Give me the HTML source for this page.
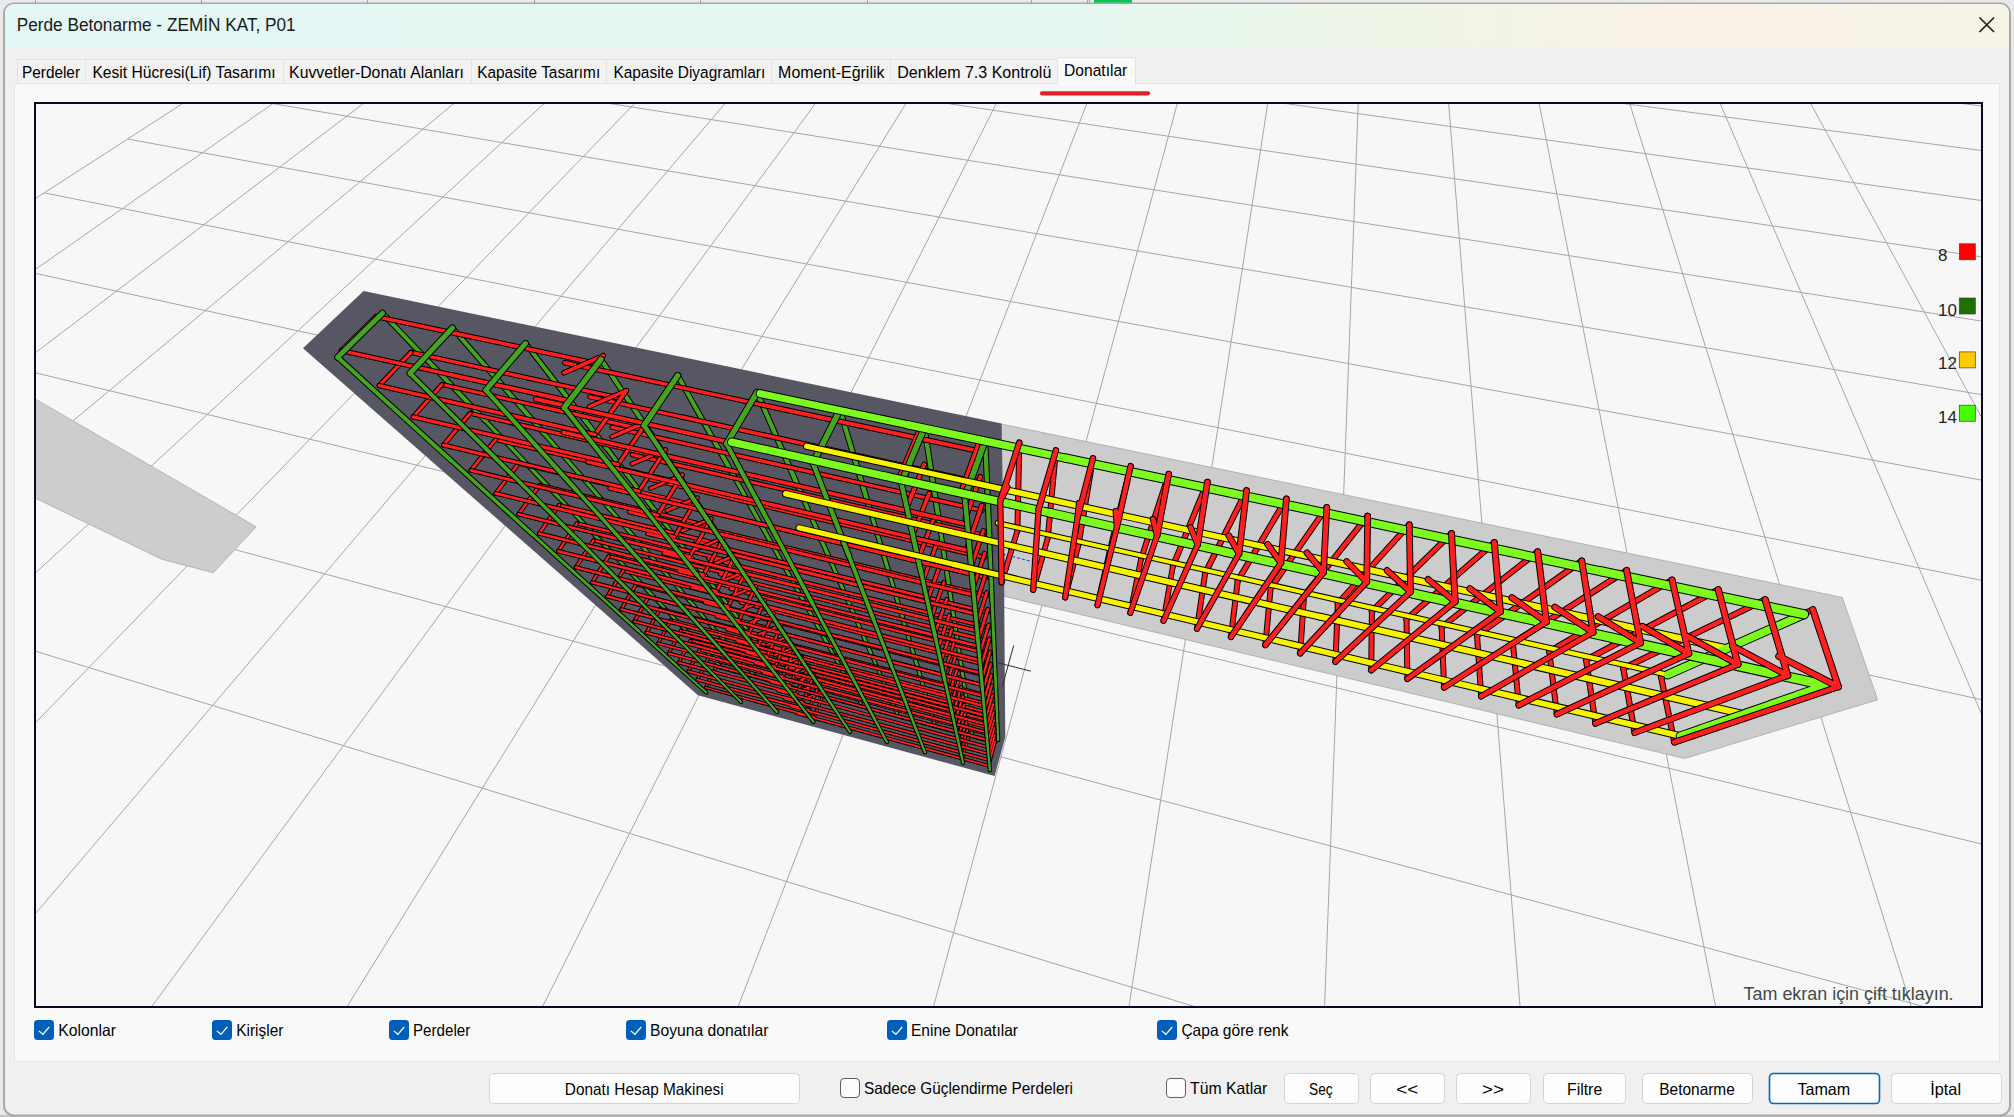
<!DOCTYPE html>
<html><head><meta charset="utf-8"><style>
html,body{margin:0;padding:0;width:2014px;height:1117px;overflow:hidden;background:#e9e9e9}
svg{display:block}
text{font-family:"Liberation Sans",sans-serif}
</style></head><body>
<svg width="2014" height="1117" viewBox="0 0 2014 1117">
<rect x="0" y="0" width="2014" height="1117" fill="#e9e9e9"/>
<line x1="35.5" y1="0" x2="35.5" y2="3" stroke="#9a9ab8" stroke-width="1"/>
<line x1="201.5" y1="0" x2="201.5" y2="3" stroke="#9a9ab8" stroke-width="1"/>
<line x1="367.5" y1="0" x2="367.5" y2="3" stroke="#9a9ab8" stroke-width="1"/>
<line x1="534.5" y1="0" x2="534.5" y2="3" stroke="#9a9ab8" stroke-width="1"/>
<line x1="700.5" y1="0" x2="700.5" y2="3" stroke="#9a9ab8" stroke-width="1"/>
<line x1="867.5" y1="0" x2="867.5" y2="3" stroke="#9a9ab8" stroke-width="1"/>
<line x1="1031.5" y1="0" x2="1031.5" y2="3" stroke="#9a9ab8" stroke-width="1"/>
<line x1="1087.5" y1="0" x2="1087.5" y2="3" stroke="#9a9ab8" stroke-width="1"/>
<line x1="1089.5" y1="0" x2="1089.5" y2="3" stroke="#9a9ab8" stroke-width="1"/>
<rect x="1094" y="0" width="38" height="3" fill="#00c853"/>
<defs><linearGradient id="tg" x1="0" y1="0" x2="1" y2="0"><stop offset="0" stop-color="#e3f7f6"/><stop offset="0.52" stop-color="#e4f7f0"/><stop offset="0.7" stop-color="#eef5e6"/><stop offset="0.83" stop-color="#faf1e8"/><stop offset="1" stop-color="#f6f3e7"/></linearGradient><clipPath id="wclip"><rect x="5" y="4" width="2004" height="1110.5" rx="9"/></clipPath><clipPath id="vclip"><rect x="36" y="104" width="1945" height="902"/></clipPath></defs>
<rect x="0" y="1115" width="2014" height="2" fill="#c4c4c4"/>
<rect x="3" y="2.5" width="2008" height="1114" rx="11" fill="#a9a9a9"/>
<g clip-path="url(#wclip)">
<rect x="5" y="4" width="2004" height="1111" fill="#f0f0f0"/>
<rect x="5" y="4" width="2004" height="43" fill="url(#tg)"/>
</g>
<text x="16.7" y="31.3" font-size="18.7" fill="#1a1a1a" textLength="279" lengthAdjust="spacingAndGlyphs" >Perde Betonarme - ZEMİN KAT, P01</text>
<path d="M1979.5 17.5 L1994 32 M1994 17.5 L1979.5 32" stroke="#1a1a1a" stroke-width="1.6" fill="none"/>
<rect x="17.5" y="59.5" width="68" height="24" fill="#f2f2f2" stroke="#e3e3e3" stroke-width="1"/>
<text x="22.0" y="78" font-size="17.4" fill="#000" textLength="58.0" lengthAdjust="spacingAndGlyphs" >Perdeler</text>
<rect x="85.5" y="59.5" width="198" height="24" fill="#f2f2f2" stroke="#e3e3e3" stroke-width="1"/>
<text x="92.4" y="78" font-size="17.4" fill="#000" textLength="183.2" lengthAdjust="spacingAndGlyphs" >Kesit Hücresi(Lif) Tasarımı</text>
<rect x="283.5" y="59.5" width="188" height="24" fill="#f2f2f2" stroke="#e3e3e3" stroke-width="1"/>
<text x="289.1" y="78" font-size="17.4" fill="#000" textLength="174.7" lengthAdjust="spacingAndGlyphs" >Kuvvetler-Donatı Alanları</text>
<rect x="471.5" y="59.5" width="135" height="24" fill="#f2f2f2" stroke="#e3e3e3" stroke-width="1"/>
<text x="477.2" y="78" font-size="17.4" fill="#000" textLength="123.0" lengthAdjust="spacingAndGlyphs" >Kapasite Tasarımı</text>
<rect x="606.5" y="59.5" width="165" height="24" fill="#f2f2f2" stroke="#e3e3e3" stroke-width="1"/>
<text x="613.4" y="78" font-size="17.4" fill="#000" textLength="151.9" lengthAdjust="spacingAndGlyphs" >Kapasite Diyagramları</text>
<rect x="771.5" y="59.5" width="119" height="24" fill="#f2f2f2" stroke="#e3e3e3" stroke-width="1"/>
<text x="778.1" y="78" font-size="17.4" fill="#000" textLength="106.4" lengthAdjust="spacingAndGlyphs" >Moment-Eğrilik</text>
<rect x="890.5" y="59.5" width="167" height="24" fill="#f2f2f2" stroke="#e3e3e3" stroke-width="1"/>
<text x="897.3" y="78" font-size="17.4" fill="#000" textLength="154.0" lengthAdjust="spacingAndGlyphs" >Denklem 7.3 Kontrolü</text>
<rect x="14.5" y="83.5" width="1985" height="978" fill="#f9f9f9" stroke="#e4e4e4" stroke-width="1"/>
<rect x="1057.5" y="57.5" width="78" height="27" fill="#f9f9f9" stroke="#e3e3e3" stroke-width="1"/>
<rect x="1058" y="82" width="77" height="4" fill="#f9f9f9"/>
<text x="1064.1" y="76.3" font-size="17.4" fill="#000" textLength="63.2" lengthAdjust="spacingAndGlyphs" >Donatılar</text>
<line x1="1042" y1="93.3" x2="1148" y2="93.3" stroke="#e0202a" stroke-width="4.2" stroke-linecap="round"/>
<rect x="35" y="103" width="1947" height="904" fill="#f7f7f7" stroke="#0a0a1e" stroke-width="2"/>
<g clip-path="url(#vclip)">
<path d="M690.4 -224.4L-2589.9 1894.0M736.7 -220.3L-2495.8 2036.7M783.9 -216.0L-2390.7 2196.2M832.0 -211.7L-2272.5 2375.7M881.0 -207.3L-2138.4 2579.0M930.9 -202.8L-1985.2 2811.5M981.8 -198.2L-1808.4 3079.8M1033.7 -193.5L-1602.1 3392.9M1086.7 -188.7L-1358.2 3762.9M1140.7 -183.9L-1065.5 4207.1M1195.9 -178.9L-707.6 4750.1M1252.1 -173.8L-260.1 5429.1M1309.5 -168.7L315.5 6302.6M1368.2 -163.4L1083.5 7467.8M1428.0 -158.0L2159.6 9100.6M1489.2 -152.5L3775.6 11552.7M1551.7 -146.8L6474.3 15647.5M1615.5 -141.1L11891.3 23867.1M1680.8 -135.2L28301.9 48767.7M1747.5 -129.2L-2217100.8 -3358305.4M1815.7 -123.1L-35932.1 -48698.0M1885.5 -116.8L-20220.6 -24858.1M1956.9 -110.3L-14933.0 -16835.0M2030.0 -103.7L-12279.7 -12808.9M2104.8 -97.0L-10684.6 -10388.6M2181.4 -90.1L-9620.0 -8773.1M2259.9 -83.0L-8858.8 -7618.2M2340.3 -75.8L-8287.7 -6751.6M2422.7 -68.4L-7843.2 -6077.2M690.4 -224.4L3485.9 27.4M665.6 -208.4L3605.0 67.2M639.0 -191.2L3738.4 111.8M610.3 -172.7L3888.9 162.2M579.3 -152.7L4059.9 219.4M545.8 -131.1L4256.1 285.0M509.4 -107.5L4483.3 360.9M469.7 -81.9L4749.6 450.0M426.2 -53.8L5066.1 555.8M378.4 -22.9L5448.3 683.7M325.5 11.2L5919.1 841.1M266.9 49.1L6513.4 1039.9M201.3 91.4L7287.1 1298.6M127.7 139.0L8335.9 1649.4M44.3 192.9L9838.3 2151.8M-51.0 254.4L12169.4 2931.4M-160.8 325.3L16276.4 4304.8M-288.8 407.9L25437.2 7368.4M-439.8 505.5L63897.7 20230.6M-620.7 622.3L-102936.8 -35562.9M-841.4 764.8L-27047.4 -10183.7M-1116.6 942.6L-15073.4 -6179.3M-1469.3 1170.4L-10195.7 -4548.1M-1937.7 1472.9L-7548.0 -3662.6" stroke="#a6a6a6" stroke-width="1" fill="none"/>
<polygon points="35,398.8 256.2,526.8 213.3,572.7 161.7,559.2 35,498" fill="#cdcdcd" stroke="#a9a9a9" stroke-width="0.8"/>
<polygon points="1001,424 1842.3,597.4 1877.7,699.8 1684.7,758.5 1004.5,596.4" fill="#cccccc" stroke="#a8a8a8" stroke-width="0.8"/>
<polygon points="363.6,291 1001.6,423.4 1004.2,596 1005.3,737 994.6,776 698,695.2 303,348.3" fill="#575763"/>
<path d="M691.2 636.0L719.7 665.7M728.8 645.8L754.0 674.9M767.4 656.0L789.3 684.3M806.6 666.3L825.1 693.9M845.9 676.6L860.8 703.5" stroke="#000" stroke-width="4.00" stroke-linecap="round" fill="none"/>
<path d="M656.5 599.7L691.2 636.0M697.9 610.4L728.8 645.8M740.6 621.3L767.4 656.0M783.9 632.5L806.6 666.3M827.5 643.7L845.9 676.6M871.8 655.1L885.7 687.1M885.7 687.1L897.1 713.2M926.8 697.9L934.4 723.2M968.0 708.8L971.8 733.2M997.1 716.4L998.2 740.2" stroke="#000" stroke-width="4.25" stroke-linecap="round" fill="none"/>
<path d="M613.3 554.5L656.5 599.7M659.4 566.1L697.9 610.4M707.0 578.0L740.6 621.3M755.6 590.2L783.9 632.5M917.5 666.9L926.8 697.9M963.3 678.7L968.0 708.8M995.9 687.1L997.1 716.4" stroke="#000" stroke-width="4.50" stroke-linecap="round" fill="none"/>
<path d="M557.9 496.6L613.3 554.5M804.4 602.4L827.5 643.7M854.2 614.9L871.8 655.1M905.6 627.8L917.5 666.9M957.4 640.8L963.3 678.7M994.2 650.0L995.9 687.1" stroke="#000" stroke-width="4.75" stroke-linecap="round" fill="none"/>
<path d="M610.0 509.2L659.4 566.1M663.9 522.2L707.0 578.0M719.0 535.5L755.6 590.2M774.6 549.0L804.4 602.4M831.4 562.7L854.2 614.9M890.3 576.9L905.6 627.8M949.8 591.3L957.4 640.8M992.1 601.5L994.2 650.0" stroke="#000" stroke-width="5.00" stroke-linecap="round" fill="none"/>
<path d="M484.5 419.9L557.9 496.6M544.2 433.6L610.0 509.2" stroke="#000" stroke-width="5.25" stroke-linecap="round" fill="none"/>
<path d="M606.3 447.8L663.9 522.2M670.0 462.4L719.0 535.5M734.5 477.2L774.6 549.0M800.6 492.3L831.4 562.7M869.5 508.1L890.3 576.9M939.4 524.1L949.8 591.3M989.3 535.6L992.1 601.5" stroke="#000" stroke-width="5.50" stroke-linecap="round" fill="none"/>
<path d="M382.4 313.2L484.5 419.9M452.4 328.0L544.2 433.6M525.5 343.4L606.3 447.8M601.0 359.4L670.0 462.4M677.7 375.6L734.5 477.2" stroke="#000" stroke-width="6.00" stroke-linecap="round" fill="none"/>
<path d="M757.0 392.3L800.6 492.3M839.9 409.9L869.5 508.1M924.4 427.7L939.4 524.1M985.2 440.6L989.3 535.6" stroke="#000" stroke-width="6.25" stroke-linecap="round" fill="none"/>
<path d="M691.2 636.0L719.7 665.7M728.8 645.8L754.0 674.9M767.4 656.0L789.3 684.3M806.6 666.3L825.1 693.9M845.9 676.6L860.8 703.5" stroke="#45a51f" stroke-width="2.00" stroke-linecap="round" fill="none"/>
<path d="M656.5 599.7L691.2 636.0M697.9 610.4L728.8 645.8M740.6 621.3L767.4 656.0M783.9 632.5L806.6 666.3M827.5 643.7L845.9 676.6M871.8 655.1L885.7 687.1M885.7 687.1L897.1 713.2M926.8 697.9L934.4 723.2M968.0 708.8L971.8 733.2M997.1 716.4L998.2 740.2" stroke="#45a51f" stroke-width="2.25" stroke-linecap="round" fill="none"/>
<path d="M613.3 554.5L656.5 599.7M659.4 566.1L697.9 610.4M707.0 578.0L740.6 621.3M755.6 590.2L783.9 632.5M917.5 666.9L926.8 697.9M963.3 678.7L968.0 708.8M995.9 687.1L997.1 716.4" stroke="#45a51f" stroke-width="2.50" stroke-linecap="round" fill="none"/>
<path d="M557.9 496.6L613.3 554.5M804.4 602.4L827.5 643.7M854.2 614.9L871.8 655.1M905.6 627.8L917.5 666.9M957.4 640.8L963.3 678.7M994.2 650.0L995.9 687.1" stroke="#45a51f" stroke-width="2.75" stroke-linecap="round" fill="none"/>
<path d="M610.0 509.2L659.4 566.1M663.9 522.2L707.0 578.0M719.0 535.5L755.6 590.2M774.6 549.0L804.4 602.4M831.4 562.7L854.2 614.9M890.3 576.9L905.6 627.8M949.8 591.3L957.4 640.8M992.1 601.5L994.2 650.0" stroke="#45a51f" stroke-width="3.00" stroke-linecap="round" fill="none"/>
<path d="M484.5 419.9L557.9 496.6M544.2 433.6L610.0 509.2" stroke="#45a51f" stroke-width="3.25" stroke-linecap="round" fill="none"/>
<path d="M606.3 447.8L663.9 522.2M670.0 462.4L719.0 535.5M734.5 477.2L774.6 549.0M800.6 492.3L831.4 562.7M869.5 508.1L890.3 576.9M939.4 524.1L949.8 591.3M989.3 535.6L992.1 601.5" stroke="#45a51f" stroke-width="3.50" stroke-linecap="round" fill="none"/>
<path d="M382.4 313.2L484.5 419.9M452.4 328.0L544.2 433.6M525.5 343.4L606.3 447.8M601.0 359.4L670.0 462.4M677.7 375.6L734.5 477.2" stroke="#45a51f" stroke-width="4.00" stroke-linecap="round" fill="none"/>
<path d="M757.0 392.3L800.6 492.3M839.9 409.9L869.5 508.1M924.4 427.7L939.4 524.1M985.2 440.6L989.3 535.6" stroke="#45a51f" stroke-width="4.25" stroke-linecap="round" fill="none"/>
<path d="M716.2 666.7L769.1 680.9M769.1 680.9L823.1 695.3M806.3 692.0L852.3 704.3M852.3 704.3L899.1 716.9" stroke="#000" stroke-width="3.50" stroke-linecap="round" fill="none"/>
<path d="M670.9 620.0L731.5 635.8M731.5 635.8L793.6 652.0M774.5 648.6L827.4 662.5M827.4 662.5L881.5 676.6M681.0 630.5L739.9 645.9M739.9 645.9L800.3 661.8M781.6 658.4L833.0 671.9M833.0 671.9L885.5 685.7M885.5 685.7L939.0 699.7M939.0 699.7L993.7 714.1M690.6 640.3L747.9 655.4M747.9 655.4L806.5 670.9M788.3 667.5L838.3 680.7M838.3 680.7L889.2 694.2M889.2 694.2L941.1 707.9M941.1 707.9L994.1 721.9M699.6 649.6L755.4 664.4M755.4 664.4L812.4 679.5M794.7 676.2L843.2 689.1M843.2 689.1L892.7 702.2M892.7 702.2L943.1 715.6M943.1 715.6L994.5 729.3M708.2 658.4L762.4 672.9M762.4 672.9L817.9 687.7M800.6 684.3L847.9 696.9M847.9 696.9L896.0 709.8M896.0 709.8L945.0 722.8M945.0 722.8L994.9 736.2M899.1 716.9L946.7 729.7M946.7 729.7L995.3 742.7" stroke="#000" stroke-width="3.75" stroke-linecap="round" fill="none"/>
<path d="M623.0 570.7L691.7 588.1M691.7 588.1L762.3 606.0M740.8 602.7L801.1 618.0M636.2 584.3L702.7 601.3M702.7 601.3L771.0 618.8M750.1 615.4L808.3 630.3M808.3 630.3L868.0 645.5M868.0 645.5L929.0 661.2M929.0 661.2L991.6 677.2M648.5 597.0L712.9 613.6M712.9 613.6L779.1 630.6M758.8 627.2L815.1 641.7M815.1 641.7L872.8 656.6M872.8 656.6L931.8 671.8M931.8 671.8L992.1 687.4M660.0 608.9L722.5 625.1M722.5 625.1L786.6 641.7M766.9 638.3L821.5 652.4M821.5 652.4L877.3 666.9M877.3 666.9L934.4 681.7M934.4 681.7L992.7 696.9M881.5 676.6L936.8 691.0M936.8 691.0L993.2 705.8" stroke="#000" stroke-width="4.00" stroke-linecap="round" fill="none"/>
<path d="M577.0 523.4L653.3 542.2M593.5 540.4L667.1 558.7M667.1 558.7L743.0 577.6M720.0 574.3L784.7 590.5M784.7 590.5L851.2 607.0M851.2 607.0L919.5 624.0M608.8 556.1L679.8 574.0M679.8 574.0L753.0 592.3M730.8 589.0L793.2 604.7M793.2 604.7L857.2 620.8M857.2 620.8L922.9 637.4M922.9 637.4L990.3 654.3M801.1 618.0L862.8 633.6M862.8 633.6L926.1 649.7M926.1 649.7L990.9 666.2" stroke="#000" stroke-width="4.25" stroke-linecap="round" fill="none"/>
<path d="M539.8 485.1L622.2 504.9M622.2 504.9L707.4 525.4M681.9 522.4L754.8 540.0M559.2 505.1L638.4 524.4M638.4 524.4L720.3 544.3M695.7 541.2L765.6 558.2M765.6 558.2L837.6 575.8M837.6 575.8L911.7 593.8M911.7 593.8L987.9 612.4M653.3 542.2L732.1 561.6M708.3 558.4L775.6 575.0M775.6 575.0L844.7 592.1M844.7 592.1L915.7 609.6M915.7 609.6L988.8 627.6M919.5 624.0L989.5 641.5" stroke="#000" stroke-width="4.50" stroke-linecap="round" fill="none"/>
<path d="M495.5 439.6L585.0 460.4M585.0 460.4L677.9 482.0M650.4 479.4L729.9 498.0M518.7 463.4L604.5 483.7M604.5 483.7L693.4 504.7M666.9 501.9L743.0 520.0M743.0 520.0L821.4 538.6M821.4 538.6L902.4 557.8M902.4 557.8L985.9 577.6M754.8 540.0L829.9 558.0M829.9 558.0L907.2 576.6M907.2 576.6L987.0 595.8" stroke="#000" stroke-width="4.75" stroke-linecap="round" fill="none"/>
<path d="M442.0 384.5L539.9 406.4M470.1 413.4L563.6 434.8M563.6 434.8L660.9 457.0M632.2 454.7L715.6 473.8M715.6 473.8L801.8 493.6M801.8 493.6L891.1 514.1M729.9 498.0L812.1 517.2M812.1 517.2L897.0 537.0M897.0 537.0L984.8 557.5" stroke="#000" stroke-width="5.00" stroke-linecap="round" fill="none"/>
<path d="M410.9 352.4L513.6 374.9M513.6 374.9L620.9 398.3M589.8 396.8L681.9 417.0M539.9 406.4L642.0 429.2M612.1 427.3L699.7 447.0M699.7 447.0L790.4 467.4M790.4 467.4L884.5 488.5M884.5 488.5L982.1 510.4M891.1 514.1L983.5 535.3" stroke="#000" stroke-width="5.25" stroke-linecap="round" fill="none"/>
<path d="M376.1 316.6L484.1 339.5M484.1 339.5L597.3 363.6M564.7 362.7L662.0 383.4M662.0 383.4L763.3 405.1M681.9 417.0L777.6 438.0M777.6 438.0L877.1 459.9M877.1 459.9L980.5 482.6" stroke="#000" stroke-width="5.50" stroke-linecap="round" fill="none"/>
<path d="M763.3 405.1L868.7 427.6M868.7 427.6L978.7 451.1" stroke="#000" stroke-width="5.75" stroke-linecap="round" fill="none"/>
<path d="M716.2 666.7L769.1 680.9M769.1 680.9L823.1 695.3M806.3 692.0L852.3 704.3M852.3 704.3L899.1 716.9" stroke="#ff1f1f" stroke-width="1.50" stroke-linecap="round" fill="none"/>
<path d="M670.9 620.0L731.5 635.8M731.5 635.8L793.6 652.0M774.5 648.6L827.4 662.5M827.4 662.5L881.5 676.6M681.0 630.5L739.9 645.9M739.9 645.9L800.3 661.8M781.6 658.4L833.0 671.9M833.0 671.9L885.5 685.7M885.5 685.7L939.0 699.7M939.0 699.7L993.7 714.1M690.6 640.3L747.9 655.4M747.9 655.4L806.5 670.9M788.3 667.5L838.3 680.7M838.3 680.7L889.2 694.2M889.2 694.2L941.1 707.9M941.1 707.9L994.1 721.9M699.6 649.6L755.4 664.4M755.4 664.4L812.4 679.5M794.7 676.2L843.2 689.1M843.2 689.1L892.7 702.2M892.7 702.2L943.1 715.6M943.1 715.6L994.5 729.3M708.2 658.4L762.4 672.9M762.4 672.9L817.9 687.7M800.6 684.3L847.9 696.9M847.9 696.9L896.0 709.8M896.0 709.8L945.0 722.8M945.0 722.8L994.9 736.2M899.1 716.9L946.7 729.7M946.7 729.7L995.3 742.7" stroke="#ff1f1f" stroke-width="1.75" stroke-linecap="round" fill="none"/>
<path d="M623.0 570.7L691.7 588.1M691.7 588.1L762.3 606.0M740.8 602.7L801.1 618.0M636.2 584.3L702.7 601.3M702.7 601.3L771.0 618.8M750.1 615.4L808.3 630.3M808.3 630.3L868.0 645.5M868.0 645.5L929.0 661.2M929.0 661.2L991.6 677.2M648.5 597.0L712.9 613.6M712.9 613.6L779.1 630.6M758.8 627.2L815.1 641.7M815.1 641.7L872.8 656.6M872.8 656.6L931.8 671.8M931.8 671.8L992.1 687.4M660.0 608.9L722.5 625.1M722.5 625.1L786.6 641.7M766.9 638.3L821.5 652.4M821.5 652.4L877.3 666.9M877.3 666.9L934.4 681.7M934.4 681.7L992.7 696.9M881.5 676.6L936.8 691.0M936.8 691.0L993.2 705.8" stroke="#ff1f1f" stroke-width="2.00" stroke-linecap="round" fill="none"/>
<path d="M577.0 523.4L653.3 542.2M593.5 540.4L667.1 558.7M667.1 558.7L743.0 577.6M720.0 574.3L784.7 590.5M784.7 590.5L851.2 607.0M851.2 607.0L919.5 624.0M608.8 556.1L679.8 574.0M679.8 574.0L753.0 592.3M730.8 589.0L793.2 604.7M793.2 604.7L857.2 620.8M857.2 620.8L922.9 637.4M922.9 637.4L990.3 654.3M801.1 618.0L862.8 633.6M862.8 633.6L926.1 649.7M926.1 649.7L990.9 666.2" stroke="#ff1f1f" stroke-width="2.25" stroke-linecap="round" fill="none"/>
<path d="M539.8 485.1L622.2 504.9M622.2 504.9L707.4 525.4M681.9 522.4L754.8 540.0M559.2 505.1L638.4 524.4M638.4 524.4L720.3 544.3M695.7 541.2L765.6 558.2M765.6 558.2L837.6 575.8M837.6 575.8L911.7 593.8M911.7 593.8L987.9 612.4M653.3 542.2L732.1 561.6M708.3 558.4L775.6 575.0M775.6 575.0L844.7 592.1M844.7 592.1L915.7 609.6M915.7 609.6L988.8 627.6M919.5 624.0L989.5 641.5" stroke="#ff1f1f" stroke-width="2.50" stroke-linecap="round" fill="none"/>
<path d="M495.5 439.6L585.0 460.4M585.0 460.4L677.9 482.0M650.4 479.4L729.9 498.0M518.7 463.4L604.5 483.7M604.5 483.7L693.4 504.7M666.9 501.9L743.0 520.0M743.0 520.0L821.4 538.6M821.4 538.6L902.4 557.8M902.4 557.8L985.9 577.6M754.8 540.0L829.9 558.0M829.9 558.0L907.2 576.6M907.2 576.6L987.0 595.8" stroke="#ff1f1f" stroke-width="2.75" stroke-linecap="round" fill="none"/>
<path d="M442.0 384.5L539.9 406.4M470.1 413.4L563.6 434.8M563.6 434.8L660.9 457.0M632.2 454.7L715.6 473.8M715.6 473.8L801.8 493.6M801.8 493.6L891.1 514.1M729.9 498.0L812.1 517.2M812.1 517.2L897.0 537.0M897.0 537.0L984.8 557.5" stroke="#ff1f1f" stroke-width="3.00" stroke-linecap="round" fill="none"/>
<path d="M410.9 352.4L513.6 374.9M513.6 374.9L620.9 398.3M589.8 396.8L681.9 417.0M539.9 406.4L642.0 429.2M612.1 427.3L699.7 447.0M699.7 447.0L790.4 467.4M790.4 467.4L884.5 488.5M884.5 488.5L982.1 510.4M891.1 514.1L983.5 535.3" stroke="#ff1f1f" stroke-width="3.25" stroke-linecap="round" fill="none"/>
<path d="M376.1 316.6L484.1 339.5M484.1 339.5L597.3 363.6M564.7 362.7L662.0 383.4M662.0 383.4L763.3 405.1M681.9 417.0L777.6 438.0M777.6 438.0L877.1 459.9M877.1 459.9L980.5 482.6" stroke="#ff1f1f" stroke-width="3.50" stroke-linecap="round" fill="none"/>
<path d="M763.3 405.1L868.7 427.6M868.7 427.6L978.7 451.1" stroke="#ff1f1f" stroke-width="3.75" stroke-linecap="round" fill="none"/>
<path d="M705.8 687.6L716.2 666.7M813.9 717.6L825.1 690.6M825.1 690.6L806.8 697.8" stroke="#000" stroke-width="3.50" stroke-linecap="round" fill="none"/>
<path d="M658.0 643.3L670.9 620.0M796.0 646.8L774.9 655.1M668.7 653.3L681.0 630.5M789.5 686.2L802.5 656.6M802.5 656.6L782.1 664.7M678.8 662.6L690.6 640.3M986.9 745.5L994.0 720.4M958.1 737.8L965.6 712.9M796.2 694.8L808.7 665.9M808.7 665.9L788.8 673.7M688.3 671.4L699.6 649.6M987.6 752.3L994.4 727.9M959.6 744.8L966.9 720.6M802.4 702.9L814.4 674.6M814.4 674.6L795.1 682.2M697.3 679.7L708.2 658.4M988.2 758.7L994.8 734.9M961.1 751.3L968.1 727.7M808.4 710.4L819.9 682.8M819.9 682.8L801.1 690.2M988.8 764.7L995.2 741.5M962.4 757.5L969.2 734.5" stroke="#000" stroke-width="3.75" stroke-linecap="round" fill="none"/>
<path d="M607.2 596.4L623.0 570.7M765.2 600.2L741.1 609.9M621.2 609.3L636.2 584.3M758.1 645.8L773.7 613.0M773.7 613.0L750.4 622.4M634.3 621.4L648.5 597.0M983.9 713.5L992.0 685.4M950.9 704.8L959.7 677.1M766.8 657.0L781.6 625.0M781.6 625.0L759.2 634.1M646.5 632.7L660.0 608.9M984.7 722.3L992.6 695.1M952.9 713.9L961.3 687.0M774.9 667.4L789.1 636.3M789.1 636.3L767.3 644.9M985.5 730.6L993.1 704.1M954.8 722.4L962.9 696.2M782.4 677.1L796.0 646.8M986.3 738.3L993.6 712.5M956.5 730.3L964.3 704.8" stroke="#000" stroke-width="4.00" stroke-linecap="round" fill="none"/>
<path d="M558.3 551.2L577.0 523.4M575.9 567.4L593.5 540.4M727.8 607.0L746.1 571.4M746.1 571.4L720.2 582.0M592.1 582.4L608.8 556.1M981.0 682.6L990.1 651.9M944.0 673.0L954.0 642.8M738.7 620.9L756.0 586.3M756.0 586.3L731.1 596.5M982.0 693.7L990.8 663.9M946.5 684.4L956.0 655.1M748.7 633.8L765.2 600.2M983.0 703.9L991.4 675.1M948.8 695.0L957.9 666.5" stroke="#000" stroke-width="4.25" stroke-linecap="round" fill="none"/>
<path d="M518.5 514.3L539.8 485.1M711.2 518.7L682.0 530.8M539.2 533.5L559.2 505.1M703.3 575.4L723.9 537.7M723.9 537.7L695.8 549.3M978.6 657.4L988.6 624.7M938.4 647.3L949.3 615.1M716.1 591.8L735.4 555.3M735.4 555.3L708.5 566.3M979.8 670.5L989.4 638.9M941.3 660.7L951.7 629.5" stroke="#000" stroke-width="4.50" stroke-linecap="round" fill="none"/>
<path d="M470.9 470.4L495.5 439.6M682.3 474.9L650.3 488.4M495.8 493.4L518.7 463.4M673.9 537.7L697.4 497.8M697.4 497.8L666.9 510.6M975.7 627.4L986.8 592.4M931.7 616.5L943.8 582.1M689.3 557.4L711.2 518.7M977.2 643.1L987.7 609.3M935.2 632.6L946.7 599.3" stroke="#000" stroke-width="4.75" stroke-linecap="round" fill="none"/>
<path d="M413.1 416.9L442.0 384.5M443.5 445.0L470.1 413.4M638.4 492.0L665.6 449.7M665.6 449.7L632.0 463.9M972.2 590.9L984.6 553.4M923.6 579.2L937.2 542.4M657.1 516.0L682.3 474.9M974.1 610.1L985.7 573.9M927.9 598.8L940.7 563.2" stroke="#000" stroke-width="5.00" stroke-linecap="round" fill="none"/>
<path d="M379.3 385.6L410.9 352.4M626.4 390.6L589.2 406.7M617.6 465.3L647.1 421.7M647.1 421.7L611.8 436.8M970.2 569.6L983.3 530.7M918.9 557.4L933.4 519.3" stroke="#000" stroke-width="5.25" stroke-linecap="round" fill="none"/>
<path d="M341.4 350.6L376.1 316.6M568.2 401.8L603.3 355.7M603.3 355.7L563.9 372.8M594.4 435.5L626.4 390.6M967.9 545.6L981.8 505.3M913.5 533.0L929.1 493.5" stroke="#000" stroke-width="5.50" stroke-linecap="round" fill="none"/>
<path d="M965.4 518.7L980.2 476.8M907.6 505.5L924.2 464.5" stroke="#000" stroke-width="5.75" stroke-linecap="round" fill="none"/>
<path d="M962.5 488.0L978.4 444.5M900.8 474.4L918.8 431.8" stroke="#000" stroke-width="6.00" stroke-linecap="round" fill="none"/>
<path d="M705.8 687.6L716.2 666.7M813.9 717.6L825.1 690.6M825.1 690.6L806.8 697.8" stroke="#ff1f1f" stroke-width="1.50" stroke-linecap="round" fill="none"/>
<path d="M658.0 643.3L670.9 620.0M796.0 646.8L774.9 655.1M668.7 653.3L681.0 630.5M789.5 686.2L802.5 656.6M802.5 656.6L782.1 664.7M678.8 662.6L690.6 640.3M986.9 745.5L994.0 720.4M958.1 737.8L965.6 712.9M796.2 694.8L808.7 665.9M808.7 665.9L788.8 673.7M688.3 671.4L699.6 649.6M987.6 752.3L994.4 727.9M959.6 744.8L966.9 720.6M802.4 702.9L814.4 674.6M814.4 674.6L795.1 682.2M697.3 679.7L708.2 658.4M988.2 758.7L994.8 734.9M961.1 751.3L968.1 727.7M808.4 710.4L819.9 682.8M819.9 682.8L801.1 690.2M988.8 764.7L995.2 741.5M962.4 757.5L969.2 734.5" stroke="#ff1f1f" stroke-width="1.75" stroke-linecap="round" fill="none"/>
<path d="M607.2 596.4L623.0 570.7M765.2 600.2L741.1 609.9M621.2 609.3L636.2 584.3M758.1 645.8L773.7 613.0M773.7 613.0L750.4 622.4M634.3 621.4L648.5 597.0M983.9 713.5L992.0 685.4M950.9 704.8L959.7 677.1M766.8 657.0L781.6 625.0M781.6 625.0L759.2 634.1M646.5 632.7L660.0 608.9M984.7 722.3L992.6 695.1M952.9 713.9L961.3 687.0M774.9 667.4L789.1 636.3M789.1 636.3L767.3 644.9M985.5 730.6L993.1 704.1M954.8 722.4L962.9 696.2M782.4 677.1L796.0 646.8M986.3 738.3L993.6 712.5M956.5 730.3L964.3 704.8" stroke="#ff1f1f" stroke-width="2.00" stroke-linecap="round" fill="none"/>
<path d="M558.3 551.2L577.0 523.4M575.9 567.4L593.5 540.4M727.8 607.0L746.1 571.4M746.1 571.4L720.2 582.0M592.1 582.4L608.8 556.1M981.0 682.6L990.1 651.9M944.0 673.0L954.0 642.8M738.7 620.9L756.0 586.3M756.0 586.3L731.1 596.5M982.0 693.7L990.8 663.9M946.5 684.4L956.0 655.1M748.7 633.8L765.2 600.2M983.0 703.9L991.4 675.1M948.8 695.0L957.9 666.5" stroke="#ff1f1f" stroke-width="2.25" stroke-linecap="round" fill="none"/>
<path d="M518.5 514.3L539.8 485.1M711.2 518.7L682.0 530.8M539.2 533.5L559.2 505.1M703.3 575.4L723.9 537.7M723.9 537.7L695.8 549.3M978.6 657.4L988.6 624.7M938.4 647.3L949.3 615.1M716.1 591.8L735.4 555.3M735.4 555.3L708.5 566.3M979.8 670.5L989.4 638.9M941.3 660.7L951.7 629.5" stroke="#ff1f1f" stroke-width="2.50" stroke-linecap="round" fill="none"/>
<path d="M470.9 470.4L495.5 439.6M682.3 474.9L650.3 488.4M495.8 493.4L518.7 463.4M673.9 537.7L697.4 497.8M697.4 497.8L666.9 510.6M975.7 627.4L986.8 592.4M931.7 616.5L943.8 582.1M689.3 557.4L711.2 518.7M977.2 643.1L987.7 609.3M935.2 632.6L946.7 599.3" stroke="#ff1f1f" stroke-width="2.75" stroke-linecap="round" fill="none"/>
<path d="M413.1 416.9L442.0 384.5M443.5 445.0L470.1 413.4M638.4 492.0L665.6 449.7M665.6 449.7L632.0 463.9M972.2 590.9L984.6 553.4M923.6 579.2L937.2 542.4M657.1 516.0L682.3 474.9M974.1 610.1L985.7 573.9M927.9 598.8L940.7 563.2" stroke="#ff1f1f" stroke-width="3.00" stroke-linecap="round" fill="none"/>
<path d="M379.3 385.6L410.9 352.4M626.4 390.6L589.2 406.7M617.6 465.3L647.1 421.7M647.1 421.7L611.8 436.8M970.2 569.6L983.3 530.7M918.9 557.4L933.4 519.3" stroke="#ff1f1f" stroke-width="3.25" stroke-linecap="round" fill="none"/>
<path d="M341.4 350.6L376.1 316.6M568.2 401.8L603.3 355.7M603.3 355.7L563.9 372.8M594.4 435.5L626.4 390.6M967.9 545.6L981.8 505.3M913.5 533.0L929.1 493.5" stroke="#ff1f1f" stroke-width="3.50" stroke-linecap="round" fill="none"/>
<path d="M965.4 518.7L980.2 476.8M907.6 505.5L924.2 464.5" stroke="#ff1f1f" stroke-width="3.75" stroke-linecap="round" fill="none"/>
<path d="M962.5 488.0L978.4 444.5M900.8 474.4L918.8 431.8" stroke="#ff1f1f" stroke-width="4.00" stroke-linecap="round" fill="none"/>
<path d="M705.8 687.6L759.4 702.2" stroke="#000" stroke-width="3.50" stroke-linecap="round" fill="none"/>
<path d="M658.0 643.3L719.5 659.7M668.7 653.3L728.5 669.3M728.5 669.3L789.8 685.7M770.9 682.0L823.1 696.0M823.1 696.0L876.4 710.3M876.4 710.3L930.8 724.8M678.8 662.6L736.9 678.2M736.9 678.2L796.4 694.2M778.1 690.6L828.7 704.2M828.7 704.2L880.5 718.2M880.5 718.2L933.2 732.4M933.2 732.4L987.1 746.9M688.3 671.4L744.8 686.7M744.8 686.7L802.7 702.3M784.8 698.7L834.0 712.0M834.0 712.0L884.3 725.6M884.3 725.6L935.5 739.4M935.5 739.4L987.7 753.6M697.3 679.7L752.3 694.6M752.3 694.6L808.6 709.9M791.2 706.3L839.0 719.3M839.0 719.3L887.9 732.6M887.9 732.6L937.6 746.1M937.6 746.1L988.3 759.9M759.4 702.2L814.1 717.1M797.2 713.5L843.8 726.2M843.8 726.2L891.2 739.2M891.2 739.2L939.6 752.4M939.6 752.4L988.9 765.8" stroke="#000" stroke-width="3.75" stroke-linecap="round" fill="none"/>
<path d="M621.2 609.3L688.9 627.0M688.9 627.0L758.4 645.2M737.2 641.4L796.5 657.0M796.5 657.0L857.2 672.9M634.3 621.4L699.8 638.7M699.8 638.7L767.0 656.4M746.5 652.6L803.8 667.7M803.8 667.7L862.5 683.2M862.5 683.2L922.6 699.0M922.6 699.0L984.1 715.2M646.5 632.7L710.0 649.5M710.0 649.5L775.1 666.8M755.2 663.1L810.7 677.8M810.7 677.8L867.5 692.8M867.5 692.8L925.5 708.2M925.5 708.2L984.9 724.0M719.5 659.7L782.7 676.5M763.3 672.8L817.1 687.2M817.1 687.2L872.1 701.8M872.1 701.8L928.3 716.8M928.3 716.8L985.7 732.1M930.8 724.8L986.4 739.7" stroke="#000" stroke-width="4.00" stroke-linecap="round" fill="none"/>
<path d="M575.9 567.4L650.9 586.6M650.9 586.6L728.2 606.3M704.9 602.6L770.9 619.5M770.9 619.5L838.8 636.8M592.1 582.4L664.5 601.1M664.5 601.1L739.0 620.3M716.5 616.5L780.1 632.9M780.1 632.9L845.4 649.8M845.4 649.8L912.4 667.1M912.4 667.1L981.2 684.8M607.2 596.4L677.1 614.5M677.1 614.5L749.1 633.2M727.2 629.4L788.6 645.4M788.6 645.4L851.5 661.8M851.5 661.8L916.1 678.5M916.1 678.5L982.2 695.7M857.2 672.9L919.4 689.2M919.4 689.2L983.2 705.8" stroke="#000" stroke-width="4.25" stroke-linecap="round" fill="none"/>
<path d="M518.5 514.3L602.6 535.1M539.2 533.5L620.1 553.7M620.1 553.7L703.7 574.7M678.6 571.1L750.1 589.0M750.1 589.0L823.7 607.4M823.7 607.4L899.4 626.4M558.3 551.2L636.1 570.8M636.1 570.8L716.4 591.1M692.3 587.5L761.0 604.9M761.0 604.9L831.5 622.7M831.5 622.7L904.1 641.1M904.1 641.1L978.8 660.0M838.8 636.8L908.4 654.6M908.4 654.6L980.0 672.9" stroke="#000" stroke-width="4.50" stroke-linecap="round" fill="none"/>
<path d="M470.9 470.4L562.4 492.4M495.8 493.4L583.5 514.8M583.5 514.8L674.4 536.9M647.5 533.6L725.3 552.6M725.3 552.6L805.7 572.3M602.6 535.1L689.7 556.7M663.8 553.2L738.3 571.6M738.3 571.6L815.1 590.7M815.1 590.7L894.3 610.3M894.3 610.3L976.0 630.6M899.4 626.4L977.5 646.0" stroke="#000" stroke-width="4.75" stroke-linecap="round" fill="none"/>
<path d="M443.5 445.0L539.2 467.6M539.2 467.6L638.9 491.2M609.8 488.3L695.3 508.6M562.4 492.4L657.6 515.2M629.6 512.1L711.1 531.7M711.1 531.7L795.3 552.0M795.3 552.0L882.4 573.0M882.4 573.0L972.6 594.8M805.7 572.3L888.7 592.6M888.7 592.6L974.4 613.6" stroke="#000" stroke-width="5.00" stroke-linecap="round" fill="none"/>
<path d="M379.3 385.6L484.7 409.6M413.1 416.9L513.5 440.2M513.5 440.2L618.2 464.5M587.8 461.9L677.7 482.8M677.7 482.8L771.0 504.5M695.3 508.6L783.8 529.6M783.8 529.6L875.5 551.3M875.5 551.3L970.6 573.9" stroke="#000" stroke-width="5.25" stroke-linecap="round" fill="none"/>
<path d="M341.4 350.6L452.4 375.1M484.7 409.6L595.0 434.6M563.3 432.4L658.0 454.0M658.0 454.0L756.6 476.4M756.6 476.4L859.1 499.8M771.0 504.5L867.8 527.1M867.8 527.1L968.4 550.5" stroke="#000" stroke-width="5.50" stroke-linecap="round" fill="none"/>
<path d="M452.4 375.1L568.9 400.9M535.7 399.2L635.9 421.5M635.9 421.5L740.3 444.7M740.3 444.7L849.3 469.0M859.1 499.8L965.9 524.2" stroke="#000" stroke-width="5.75" stroke-linecap="round" fill="none"/>
<path d="M849.3 469.0L963.1 494.3" stroke="#000" stroke-width="6.00" stroke-linecap="round" fill="none"/>
<path d="M705.8 687.6L759.4 702.2" stroke="#ff1f1f" stroke-width="1.50" stroke-linecap="round" fill="none"/>
<path d="M658.0 643.3L719.5 659.7M668.7 653.3L728.5 669.3M728.5 669.3L789.8 685.7M770.9 682.0L823.1 696.0M823.1 696.0L876.4 710.3M876.4 710.3L930.8 724.8M678.8 662.6L736.9 678.2M736.9 678.2L796.4 694.2M778.1 690.6L828.7 704.2M828.7 704.2L880.5 718.2M880.5 718.2L933.2 732.4M933.2 732.4L987.1 746.9M688.3 671.4L744.8 686.7M744.8 686.7L802.7 702.3M784.8 698.7L834.0 712.0M834.0 712.0L884.3 725.6M884.3 725.6L935.5 739.4M935.5 739.4L987.7 753.6M697.3 679.7L752.3 694.6M752.3 694.6L808.6 709.9M791.2 706.3L839.0 719.3M839.0 719.3L887.9 732.6M887.9 732.6L937.6 746.1M937.6 746.1L988.3 759.9M759.4 702.2L814.1 717.1M797.2 713.5L843.8 726.2M843.8 726.2L891.2 739.2M891.2 739.2L939.6 752.4M939.6 752.4L988.9 765.8" stroke="#ff1f1f" stroke-width="1.75" stroke-linecap="round" fill="none"/>
<path d="M621.2 609.3L688.9 627.0M688.9 627.0L758.4 645.2M737.2 641.4L796.5 657.0M796.5 657.0L857.2 672.9M634.3 621.4L699.8 638.7M699.8 638.7L767.0 656.4M746.5 652.6L803.8 667.7M803.8 667.7L862.5 683.2M862.5 683.2L922.6 699.0M922.6 699.0L984.1 715.2M646.5 632.7L710.0 649.5M710.0 649.5L775.1 666.8M755.2 663.1L810.7 677.8M810.7 677.8L867.5 692.8M867.5 692.8L925.5 708.2M925.5 708.2L984.9 724.0M719.5 659.7L782.7 676.5M763.3 672.8L817.1 687.2M817.1 687.2L872.1 701.8M872.1 701.8L928.3 716.8M928.3 716.8L985.7 732.1M930.8 724.8L986.4 739.7" stroke="#ff1f1f" stroke-width="2.00" stroke-linecap="round" fill="none"/>
<path d="M575.9 567.4L650.9 586.6M650.9 586.6L728.2 606.3M704.9 602.6L770.9 619.5M770.9 619.5L838.8 636.8M592.1 582.4L664.5 601.1M664.5 601.1L739.0 620.3M716.5 616.5L780.1 632.9M780.1 632.9L845.4 649.8M845.4 649.8L912.4 667.1M912.4 667.1L981.2 684.8M607.2 596.4L677.1 614.5M677.1 614.5L749.1 633.2M727.2 629.4L788.6 645.4M788.6 645.4L851.5 661.8M851.5 661.8L916.1 678.5M916.1 678.5L982.2 695.7M857.2 672.9L919.4 689.2M919.4 689.2L983.2 705.8" stroke="#ff1f1f" stroke-width="2.25" stroke-linecap="round" fill="none"/>
<path d="M518.5 514.3L602.6 535.1M539.2 533.5L620.1 553.7M620.1 553.7L703.7 574.7M678.6 571.1L750.1 589.0M750.1 589.0L823.7 607.4M823.7 607.4L899.4 626.4M558.3 551.2L636.1 570.8M636.1 570.8L716.4 591.1M692.3 587.5L761.0 604.9M761.0 604.9L831.5 622.7M831.5 622.7L904.1 641.1M904.1 641.1L978.8 660.0M838.8 636.8L908.4 654.6M908.4 654.6L980.0 672.9" stroke="#ff1f1f" stroke-width="2.50" stroke-linecap="round" fill="none"/>
<path d="M470.9 470.4L562.4 492.4M495.8 493.4L583.5 514.8M583.5 514.8L674.4 536.9M647.5 533.6L725.3 552.6M725.3 552.6L805.7 572.3M602.6 535.1L689.7 556.7M663.8 553.2L738.3 571.6M738.3 571.6L815.1 590.7M815.1 590.7L894.3 610.3M894.3 610.3L976.0 630.6M899.4 626.4L977.5 646.0" stroke="#ff1f1f" stroke-width="2.75" stroke-linecap="round" fill="none"/>
<path d="M443.5 445.0L539.2 467.6M539.2 467.6L638.9 491.2M609.8 488.3L695.3 508.6M562.4 492.4L657.6 515.2M629.6 512.1L711.1 531.7M711.1 531.7L795.3 552.0M795.3 552.0L882.4 573.0M882.4 573.0L972.6 594.8M805.7 572.3L888.7 592.6M888.7 592.6L974.4 613.6" stroke="#ff1f1f" stroke-width="3.00" stroke-linecap="round" fill="none"/>
<path d="M379.3 385.6L484.7 409.6M413.1 416.9L513.5 440.2M513.5 440.2L618.2 464.5M587.8 461.9L677.7 482.8M677.7 482.8L771.0 504.5M695.3 508.6L783.8 529.6M783.8 529.6L875.5 551.3M875.5 551.3L970.6 573.9" stroke="#ff1f1f" stroke-width="3.25" stroke-linecap="round" fill="none"/>
<path d="M341.4 350.6L452.4 375.1M484.7 409.6L595.0 434.6M563.3 432.4L658.0 454.0M658.0 454.0L756.6 476.4M756.6 476.4L859.1 499.8M771.0 504.5L867.8 527.1M867.8 527.1L968.4 550.5" stroke="#ff1f1f" stroke-width="3.50" stroke-linecap="round" fill="none"/>
<path d="M452.4 375.1L568.9 400.9M535.7 399.2L635.9 421.5M635.9 421.5L740.3 444.7M740.3 444.7L849.3 469.0M859.1 499.8L965.9 524.2" stroke="#ff1f1f" stroke-width="3.75" stroke-linecap="round" fill="none"/>
<path d="M849.3 469.0L963.1 494.3" stroke="#ff1f1f" stroke-width="4.00" stroke-linecap="round" fill="none"/>
<path d="M675.9 664.9L706.3 692.6M714.1 675.2L741.2 702.1" stroke="#000" stroke-width="4.00" stroke-linecap="round" fill="none"/>
<path d="M638.6 631.0L675.9 664.9M680.9 642.1L714.1 675.2M724.4 653.7L753.5 685.8M753.5 685.8L777.1 711.9M793.5 696.6L813.5 721.9M833.5 707.4L850.0 731.9M874.2 718.4L886.9 742.0M916.2 729.7L925.0 752.4M958.2 741.0L963.0 762.8M988.0 749.1L989.9 770.2" stroke="#000" stroke-width="4.25" stroke-linecap="round" fill="none"/>
<path d="M591.9 588.5L638.6 631.0M639.1 600.7L680.9 642.1M768.7 665.4L793.5 696.6M813.3 677.2L833.5 707.4M858.6 689.2L874.2 718.4M905.3 701.6L916.2 729.7M952.3 714.0L958.2 741.0M985.6 722.9L988.0 749.1" stroke="#000" stroke-width="4.50" stroke-linecap="round" fill="none"/>
<path d="M687.9 613.3L724.4 653.7M737.6 626.2L768.7 665.4M787.6 639.1L813.3 677.2M838.7 652.3L858.6 689.2M891.5 666.0L905.3 701.6M944.7 679.7L952.3 714.0M982.5 689.5L985.6 722.9" stroke="#000" stroke-width="4.75" stroke-linecap="round" fill="none"/>
<path d="M531.7 533.7L591.9 588.5M585.1 547.1L639.1 600.7M640.5 560.9L687.9 613.3M697.1 575.1L737.6 626.2M754.3 589.5L787.6 639.1M812.8 604.1L838.7 652.3" stroke="#000" stroke-width="5.00" stroke-linecap="round" fill="none"/>
<path d="M873.5 619.3L891.5 666.0M934.8 634.7L944.7 679.7M978.5 645.6L982.5 689.5" stroke="#000" stroke-width="5.25" stroke-linecap="round" fill="none"/>
<path d="M451.1 460.4L531.7 533.7M512.6 475.1L585.1 547.1M576.6 490.4L640.5 560.9M642.4 506.1L697.1 575.1M709.0 522.1L754.3 589.5" stroke="#000" stroke-width="5.50" stroke-linecap="round" fill="none"/>
<path d="M777.5 538.5L812.8 604.1M848.8 555.5L873.5 619.3M921.2 572.9L934.8 634.7M972.9 585.3L978.5 645.6" stroke="#000" stroke-width="5.75" stroke-linecap="round" fill="none"/>
<path d="M337.7 357.2L451.1 460.4M410.1 373.3L512.6 475.1" stroke="#000" stroke-width="6.00" stroke-linecap="round" fill="none"/>
<path d="M485.9 390.2L576.6 490.4M564.2 407.7L642.4 506.1M644.1 425.5L709.0 522.1M726.5 443.8L777.5 538.5" stroke="#000" stroke-width="6.25" stroke-linecap="round" fill="none"/>
<path d="M813.0 463.1L848.8 555.5M901.3 482.8L921.2 572.9M964.8 496.9L972.9 585.3" stroke="#000" stroke-width="6.50" stroke-linecap="round" fill="none"/>
<path d="M382.4 313.2L337.7 357.2M452.4 328.0L410.1 373.3M525.5 343.4L485.9 390.2" stroke="#000" stroke-width="7.00" stroke-linecap="round" fill="none"/>
<path d="M601.0 359.4L564.2 407.7M677.7 375.6L644.1 425.5M757.0 392.3L726.5 443.8" stroke="#000" stroke-width="7.25" stroke-linecap="round" fill="none"/>
<path d="M839.9 409.9L813.0 463.1M924.4 427.7L901.3 482.8M985.2 440.6L964.8 496.9" stroke="#000" stroke-width="7.50" stroke-linecap="round" fill="none"/>
<path d="M675.9 664.9L706.3 692.6M714.1 675.2L741.2 702.1" stroke="#45a51f" stroke-width="2.00" stroke-linecap="round" fill="none"/>
<path d="M638.6 631.0L675.9 664.9M680.9 642.1L714.1 675.2M724.4 653.7L753.5 685.8M753.5 685.8L777.1 711.9M793.5 696.6L813.5 721.9M833.5 707.4L850.0 731.9M874.2 718.4L886.9 742.0M916.2 729.7L925.0 752.4M958.2 741.0L963.0 762.8M988.0 749.1L989.9 770.2" stroke="#45a51f" stroke-width="2.25" stroke-linecap="round" fill="none"/>
<path d="M591.9 588.5L638.6 631.0M639.1 600.7L680.9 642.1M768.7 665.4L793.5 696.6M813.3 677.2L833.5 707.4M858.6 689.2L874.2 718.4M905.3 701.6L916.2 729.7M952.3 714.0L958.2 741.0M985.6 722.9L988.0 749.1" stroke="#45a51f" stroke-width="2.50" stroke-linecap="round" fill="none"/>
<path d="M687.9 613.3L724.4 653.7M737.6 626.2L768.7 665.4M787.6 639.1L813.3 677.2M838.7 652.3L858.6 689.2M891.5 666.0L905.3 701.6M944.7 679.7L952.3 714.0M982.5 689.5L985.6 722.9" stroke="#45a51f" stroke-width="2.75" stroke-linecap="round" fill="none"/>
<path d="M531.7 533.7L591.9 588.5M585.1 547.1L639.1 600.7M640.5 560.9L687.9 613.3M697.1 575.1L737.6 626.2M754.3 589.5L787.6 639.1M812.8 604.1L838.7 652.3" stroke="#45a51f" stroke-width="3.00" stroke-linecap="round" fill="none"/>
<path d="M873.5 619.3L891.5 666.0M934.8 634.7L944.7 679.7M978.5 645.6L982.5 689.5" stroke="#45a51f" stroke-width="3.25" stroke-linecap="round" fill="none"/>
<path d="M451.1 460.4L531.7 533.7M512.6 475.1L585.1 547.1M576.6 490.4L640.5 560.9M642.4 506.1L697.1 575.1M709.0 522.1L754.3 589.5" stroke="#45a51f" stroke-width="3.50" stroke-linecap="round" fill="none"/>
<path d="M777.5 538.5L812.8 604.1M848.8 555.5L873.5 619.3M921.2 572.9L934.8 634.7M972.9 585.3L978.5 645.6" stroke="#45a51f" stroke-width="3.75" stroke-linecap="round" fill="none"/>
<path d="M337.7 357.2L451.1 460.4M410.1 373.3L512.6 475.1" stroke="#45a51f" stroke-width="4.00" stroke-linecap="round" fill="none"/>
<path d="M485.9 390.2L576.6 490.4M564.2 407.7L642.4 506.1M644.1 425.5L709.0 522.1M726.5 443.8L777.5 538.5" stroke="#45a51f" stroke-width="4.25" stroke-linecap="round" fill="none"/>
<path d="M813.0 463.1L848.8 555.5M901.3 482.8L921.2 572.9M964.8 496.9L972.9 585.3" stroke="#45a51f" stroke-width="4.50" stroke-linecap="round" fill="none"/>
<path d="M382.4 313.2L337.7 357.2M452.4 328.0L410.1 373.3M525.5 343.4L485.9 390.2" stroke="#45a51f" stroke-width="5.00" stroke-linecap="round" fill="none"/>
<path d="M601.0 359.4L564.2 407.7M677.7 375.6L644.1 425.5M757.0 392.3L726.5 443.8" stroke="#45a51f" stroke-width="5.25" stroke-linecap="round" fill="none"/>
<path d="M839.9 409.9L813.0 463.1M924.4 427.7L901.3 482.8M985.2 440.6L964.8 496.9" stroke="#45a51f" stroke-width="5.50" stroke-linecap="round" fill="none"/>
<path d="M992.9 551.5L1037.3 562.9M1008.6 547L1008.6 570" stroke="#1030ff" stroke-width="1" stroke-dasharray="3 2" fill="none"/>
<path d="M1001.6 582.4L1017.4 530.8M1033.2 589.9L1047.8 537.7M1065.2 597.5L1078.5 544.7M1097.5 605.2L1109.6 551.7M1130.3 612.9L1141.1 558.9M1163.5 620.8L1172.9 566.1" stroke="#000" stroke-width="5.75" stroke-linecap="round" fill="none"/>
<path d="M1017.4 530.8L1019.3 442.7M1047.8 537.7L1055.9 450.4M1078.5 544.7L1093.0 458.2M1109.6 551.7L1130.6 466.1M1141.1 558.9L1168.7 474.1M1197.0 628.8L1205.1 573.4M1231.0 636.9L1237.7 580.8M1265.4 645.0L1270.6 588.3M1300.2 653.3L1304.0 595.9M1335.5 661.7L1337.8 603.5M1371.2 670.2L1371.9 611.3M1407.4 678.8L1406.5 619.2M1444.1 687.5L1441.6 627.1M1481.2 696.3L1477.0 635.2M1518.8 705.2L1512.9 643.3M1556.9 714.3L1549.3 651.6" stroke="#000" stroke-width="6.00" stroke-linecap="round" fill="none"/>
<path d="M1172.9 566.1L1207.4 482.2M1205.1 573.4L1246.6 490.5M1237.7 580.8L1286.4 498.8M1270.6 588.3L1326.8 507.3M1304.0 595.9L1367.7 516.0M1337.8 603.5L1409.3 524.7M1371.9 611.3L1451.5 533.6M1406.5 619.2L1494.3 542.6M1441.6 627.1L1537.7 551.7M1595.5 723.4L1586.1 659.9M1634.7 732.7L1623.3 668.4M1674.3 742.2L1661.1 677.0" stroke="#000" stroke-width="6.25" stroke-linecap="round" fill="none"/>
<path d="M1477.0 635.2L1581.8 561.0M1512.9 643.3L1626.6 570.4M1549.3 651.6L1672.1 580.0M1586.1 659.9L1718.3 589.7M1623.3 668.4L1765.2 599.6M1661.1 677.0L1812.8 609.6" stroke="#000" stroke-width="6.50" stroke-linecap="round" fill="none"/>
<path d="M1001.6 582.4L1017.4 530.8M1033.2 589.9L1047.8 537.7M1065.2 597.5L1078.5 544.7M1097.5 605.2L1109.6 551.7M1130.3 612.9L1141.1 558.9M1163.5 620.8L1172.9 566.1" stroke="#ff1f1f" stroke-width="3.75" stroke-linecap="round" fill="none"/>
<path d="M1017.4 530.8L1019.3 442.7M1047.8 537.7L1055.9 450.4M1078.5 544.7L1093.0 458.2M1109.6 551.7L1130.6 466.1M1141.1 558.9L1168.7 474.1M1197.0 628.8L1205.1 573.4M1231.0 636.9L1237.7 580.8M1265.4 645.0L1270.6 588.3M1300.2 653.3L1304.0 595.9M1335.5 661.7L1337.8 603.5M1371.2 670.2L1371.9 611.3M1407.4 678.8L1406.5 619.2M1444.1 687.5L1441.6 627.1M1481.2 696.3L1477.0 635.2M1518.8 705.2L1512.9 643.3M1556.9 714.3L1549.3 651.6" stroke="#ff1f1f" stroke-width="4.00" stroke-linecap="round" fill="none"/>
<path d="M1172.9 566.1L1207.4 482.2M1205.1 573.4L1246.6 490.5M1237.7 580.8L1286.4 498.8M1270.6 588.3L1326.8 507.3M1304.0 595.9L1367.7 516.0M1337.8 603.5L1409.3 524.7M1371.9 611.3L1451.5 533.6M1406.5 619.2L1494.3 542.6M1441.6 627.1L1537.7 551.7M1595.5 723.4L1586.1 659.9M1634.7 732.7L1623.3 668.4M1674.3 742.2L1661.1 677.0" stroke="#ff1f1f" stroke-width="4.25" stroke-linecap="round" fill="none"/>
<path d="M1477.0 635.2L1581.8 561.0M1512.9 643.3L1626.6 570.4M1549.3 651.6L1672.1 580.0M1586.1 659.9L1718.3 589.7M1623.3 668.4L1765.2 599.6M1661.1 677.0L1812.8 609.6" stroke="#ff1f1f" stroke-width="4.50" stroke-linecap="round" fill="none"/>
<path d="M997.7 523.1L1119.4 550.6M1119.4 550.6L1246.7 579.4M1246.7 579.4L1380.2 609.7" stroke="#000" stroke-width="6.00" stroke-linecap="round" fill="none"/>
<path d="M1380.2 609.7L1520.3 641.4M1520.3 641.4L1667.6 674.7" stroke="#000" stroke-width="6.25" stroke-linecap="round" fill="none"/>
<path d="M806.7 446.2L967.5 481.5" stroke="#000" stroke-width="7.25" stroke-linecap="round" fill="none"/>
<path d="M967.5 481.5L1138.8 519.2M1138.8 519.2L1321.6 559.4" stroke="#000" stroke-width="7.50" stroke-linecap="round" fill="none"/>
<path d="M1321.6 559.4L1517.1 602.4" stroke="#000" stroke-width="7.75" stroke-linecap="round" fill="none"/>
<path d="M1517.1 602.4L1726.8 648.5" stroke="#000" stroke-width="8.00" stroke-linecap="round" fill="none"/>
<path d="M1804.0 614.3L1667.6 674.7" stroke="#000" stroke-width="9.50" stroke-linecap="round" fill="none"/>
<path d="M997.7 523.1L1119.4 550.6M1119.4 550.6L1246.7 579.4M1246.7 579.4L1380.2 609.7" stroke="#f8f400" stroke-width="4.00" stroke-linecap="round" fill="none"/>
<path d="M1380.2 609.7L1520.3 641.4M1520.3 641.4L1667.6 674.7" stroke="#f8f400" stroke-width="4.25" stroke-linecap="round" fill="none"/>
<path d="M806.7 446.2L967.5 481.5" stroke="#f8f400" stroke-width="5.25" stroke-linecap="round" fill="none"/>
<path d="M967.5 481.5L1138.8 519.2M1138.8 519.2L1321.6 559.4" stroke="#f8f400" stroke-width="5.50" stroke-linecap="round" fill="none"/>
<path d="M1321.6 559.4L1517.1 602.4" stroke="#f8f400" stroke-width="5.75" stroke-linecap="round" fill="none"/>
<path d="M1517.1 602.4L1726.8 648.5" stroke="#f8f400" stroke-width="6.00" stroke-linecap="round" fill="none"/>
<path d="M1804.0 614.3L1667.6 674.7" stroke="#7dfa1e" stroke-width="7.50" stroke-linecap="round" fill="none"/>
<path d="M799.0 527.8L953.8 564.4" stroke="#000" stroke-width="7.00" stroke-linecap="round" fill="none"/>
<path d="M953.8 564.4L1118.3 603.3M1118.3 603.3L1293.5 644.6" stroke="#000" stroke-width="7.25" stroke-linecap="round" fill="none"/>
<path d="M785.7 493.8L952.1 532.1M952.1 532.1L1129.8 573.0M1293.5 644.6L1480.4 688.8" stroke="#000" stroke-width="7.50" stroke-linecap="round" fill="none"/>
<path d="M1129.8 573.0L1320.1 616.7M1480.4 688.8L1680.3 736.0" stroke="#000" stroke-width="7.75" stroke-linecap="round" fill="none"/>
<path d="M1320.1 616.7L1524.2 663.7" stroke="#000" stroke-width="8.00" stroke-linecap="round" fill="none"/>
<path d="M1524.2 663.7L1743.7 714.2" stroke="#000" stroke-width="8.25" stroke-linecap="round" fill="none"/>
<path d="M799.0 527.8L953.8 564.4" stroke="#f8f400" stroke-width="5.00" stroke-linecap="round" fill="none"/>
<path d="M953.8 564.4L1118.3 603.3M1118.3 603.3L1293.5 644.6" stroke="#f8f400" stroke-width="5.25" stroke-linecap="round" fill="none"/>
<path d="M785.7 493.8L952.1 532.1M952.1 532.1L1129.8 573.0M1293.5 644.6L1480.4 688.8" stroke="#f8f400" stroke-width="5.50" stroke-linecap="round" fill="none"/>
<path d="M1129.8 573.0L1320.1 616.7M1480.4 688.8L1680.3 736.0" stroke="#f8f400" stroke-width="5.75" stroke-linecap="round" fill="none"/>
<path d="M1320.1 616.7L1524.2 663.7" stroke="#f8f400" stroke-width="6.00" stroke-linecap="round" fill="none"/>
<path d="M1524.2 663.7L1743.7 714.2" stroke="#f8f400" stroke-width="6.25" stroke-linecap="round" fill="none"/>
<path d="M760.1 393.6L908.5 424.9" stroke="#000" stroke-width="9.00" stroke-linecap="round" fill="none"/>
<path d="M908.5 424.9L1065.9 458.2M731.7 442.1L886.1 476.4M1701.0 728.9L1680.3 736.0" stroke="#000" stroke-width="9.25" stroke-linecap="round" fill="none"/>
<path d="M1065.9 458.2L1233.1 493.5M886.1 476.4L1050.4 512.9M1723.0 721.3L1701.0 728.9" stroke="#000" stroke-width="9.50" stroke-linecap="round" fill="none"/>
<path d="M1233.1 493.5L1411.1 531.2M1050.4 512.9L1225.4 551.8M1746.5 713.3L1723.0 721.3" stroke="#000" stroke-width="9.75" stroke-linecap="round" fill="none"/>
<path d="M1411.1 531.2L1601.0 571.3M1225.4 551.8L1412.4 593.4M1771.5 704.7L1746.5 713.3" stroke="#000" stroke-width="10.00" stroke-linecap="round" fill="none"/>
<path d="M1601.0 571.3L1804.0 614.3" stroke="#000" stroke-width="10.25" stroke-linecap="round" fill="none"/>
<path d="M1412.4 593.4L1612.5 637.9M1798.4 695.5L1771.5 704.7" stroke="#000" stroke-width="10.50" stroke-linecap="round" fill="none"/>
<path d="M1612.5 637.9L1827.1 685.6M1827.1 685.6L1798.4 695.5" stroke="#000" stroke-width="10.75" stroke-linecap="round" fill="none"/>
<path d="M760.1 393.6L908.5 424.9" stroke="#7dfa1e" stroke-width="7.00" stroke-linecap="round" fill="none"/>
<path d="M908.5 424.9L1065.9 458.2M731.7 442.1L886.1 476.4M1701.0 728.9L1680.3 736.0" stroke="#7dfa1e" stroke-width="7.25" stroke-linecap="round" fill="none"/>
<path d="M1065.9 458.2L1233.1 493.5M886.1 476.4L1050.4 512.9M1723.0 721.3L1701.0 728.9" stroke="#7dfa1e" stroke-width="7.50" stroke-linecap="round" fill="none"/>
<path d="M1233.1 493.5L1411.1 531.2M1050.4 512.9L1225.4 551.8M1746.5 713.3L1723.0 721.3" stroke="#7dfa1e" stroke-width="7.75" stroke-linecap="round" fill="none"/>
<path d="M1411.1 531.2L1601.0 571.3M1225.4 551.8L1412.4 593.4M1771.5 704.7L1746.5 713.3" stroke="#7dfa1e" stroke-width="8.00" stroke-linecap="round" fill="none"/>
<path d="M1601.0 571.3L1804.0 614.3" stroke="#7dfa1e" stroke-width="8.25" stroke-linecap="round" fill="none"/>
<path d="M1412.4 593.4L1612.5 637.9M1798.4 695.5L1771.5 704.7" stroke="#7dfa1e" stroke-width="8.50" stroke-linecap="round" fill="none"/>
<path d="M1612.5 637.9L1827.1 685.6M1827.1 685.6L1798.4 695.5" stroke="#7dfa1e" stroke-width="8.75" stroke-linecap="round" fill="none"/>
<path d="M1000.3 500.6L1001.6 582.4M1038.6 509.2L1033.2 589.9M1077.5 517.8L1065.2 597.5M1117.0 526.6L1097.5 605.2M1157.1 535.5L1130.3 612.9M1197.7 544.5L1163.5 620.8M1239.0 553.7L1197.0 628.8" stroke="#000" stroke-width="6.25" stroke-linecap="round" fill="none"/>
<path d="M1019.3 442.7L1000.3 500.6M1000.3 500.6L1007.3 487.1M1055.9 450.4L1038.6 509.2M1038.6 509.2L1043.0 494.9M1093.0 458.2L1077.5 517.8M1077.5 517.8L1079.2 502.9M1130.6 466.1L1117.0 526.6M1117.0 526.6L1115.8 510.9M1157.1 535.5L1153.0 519.0M1197.7 544.5L1190.6 527.3M1280.9 563.0L1231.0 636.9M1323.5 572.4L1265.4 645.0M1366.7 582.0L1300.2 653.3M1410.5 591.8L1335.5 661.7M1455.1 601.7L1371.2 670.2M1500.4 611.7L1407.4 678.8M1546.4 621.9L1444.1 687.5M1593.1 632.3L1481.2 696.3" stroke="#000" stroke-width="6.50" stroke-linecap="round" fill="none"/>
<path d="M1168.7 474.1L1157.1 535.5M1207.4 482.2L1197.7 544.5M1246.6 490.5L1239.0 553.7M1239.0 553.7L1228.8 535.7M1286.4 498.8L1280.9 563.0M1280.9 563.0L1267.6 544.2M1326.8 507.3L1323.5 572.4M1323.5 572.4L1306.9 552.8M1367.7 516.0L1366.7 582.0M1366.7 582.0L1346.7 561.5M1409.3 524.7L1410.5 591.8M1410.5 591.8L1387.1 570.4M1455.1 601.7L1428.1 579.4M1500.4 611.7L1469.7 588.5M1640.6 642.8L1518.8 705.2M1688.8 653.6L1556.9 714.3M1737.9 664.4L1595.5 723.4M1787.7 675.5L1634.7 732.7M1838.4 686.8L1674.3 742.2" stroke="#000" stroke-width="6.75" stroke-linecap="round" fill="none"/>
<path d="M1451.5 533.6L1455.1 601.7M1494.3 542.6L1500.4 611.7M1537.7 551.7L1546.4 621.9M1546.4 621.9L1511.9 597.7M1581.8 561.0L1593.1 632.3M1593.1 632.3L1554.8 607.1M1626.6 570.4L1640.6 642.8M1640.6 642.8L1598.2 616.7M1672.1 580.0L1688.8 653.6M1688.8 653.6L1642.4 626.3M1737.9 664.4L1687.1 636.1M1787.7 675.5L1732.6 646.1" stroke="#000" stroke-width="7.00" stroke-linecap="round" fill="none"/>
<path d="M1718.3 589.7L1737.9 664.4M1765.2 599.6L1787.7 675.5M1812.8 609.6L1838.4 686.8M1838.4 686.8L1778.8 656.2" stroke="#000" stroke-width="7.25" stroke-linecap="round" fill="none"/>
<path d="M1000.3 500.6L1001.6 582.4M1038.6 509.2L1033.2 589.9M1077.5 517.8L1065.2 597.5M1117.0 526.6L1097.5 605.2M1157.1 535.5L1130.3 612.9M1197.7 544.5L1163.5 620.8M1239.0 553.7L1197.0 628.8" stroke="#ff1f1f" stroke-width="4.25" stroke-linecap="round" fill="none"/>
<path d="M1019.3 442.7L1000.3 500.6M1000.3 500.6L1007.3 487.1M1055.9 450.4L1038.6 509.2M1038.6 509.2L1043.0 494.9M1093.0 458.2L1077.5 517.8M1077.5 517.8L1079.2 502.9M1130.6 466.1L1117.0 526.6M1117.0 526.6L1115.8 510.9M1157.1 535.5L1153.0 519.0M1197.7 544.5L1190.6 527.3M1280.9 563.0L1231.0 636.9M1323.5 572.4L1265.4 645.0M1366.7 582.0L1300.2 653.3M1410.5 591.8L1335.5 661.7M1455.1 601.7L1371.2 670.2M1500.4 611.7L1407.4 678.8M1546.4 621.9L1444.1 687.5M1593.1 632.3L1481.2 696.3" stroke="#ff1f1f" stroke-width="4.50" stroke-linecap="round" fill="none"/>
<path d="M1168.7 474.1L1157.1 535.5M1207.4 482.2L1197.7 544.5M1246.6 490.5L1239.0 553.7M1239.0 553.7L1228.8 535.7M1286.4 498.8L1280.9 563.0M1280.9 563.0L1267.6 544.2M1326.8 507.3L1323.5 572.4M1323.5 572.4L1306.9 552.8M1367.7 516.0L1366.7 582.0M1366.7 582.0L1346.7 561.5M1409.3 524.7L1410.5 591.8M1410.5 591.8L1387.1 570.4M1455.1 601.7L1428.1 579.4M1500.4 611.7L1469.7 588.5M1640.6 642.8L1518.8 705.2M1688.8 653.6L1556.9 714.3M1737.9 664.4L1595.5 723.4M1787.7 675.5L1634.7 732.7M1838.4 686.8L1674.3 742.2" stroke="#ff1f1f" stroke-width="4.75" stroke-linecap="round" fill="none"/>
<path d="M1451.5 533.6L1455.1 601.7M1494.3 542.6L1500.4 611.7M1537.7 551.7L1546.4 621.9M1546.4 621.9L1511.9 597.7M1581.8 561.0L1593.1 632.3M1593.1 632.3L1554.8 607.1M1626.6 570.4L1640.6 642.8M1640.6 642.8L1598.2 616.7M1672.1 580.0L1688.8 653.6M1688.8 653.6L1642.4 626.3M1737.9 664.4L1687.1 636.1M1787.7 675.5L1732.6 646.1" stroke="#ff1f1f" stroke-width="5.00" stroke-linecap="round" fill="none"/>
<path d="M1718.3 589.7L1737.9 664.4M1765.2 599.6L1787.7 675.5M1812.8 609.6L1838.4 686.8M1838.4 686.8L1778.8 656.2" stroke="#ff1f1f" stroke-width="5.25" stroke-linecap="round" fill="none"/>
<path d="M1013.7 645.4L1002.2 687M997.2 662.6L1030.9 671.2" stroke="#303030" stroke-width="1" fill="none"/>
<rect x="1959.3" y="243.8" width="16" height="16" fill="#ff0000" stroke="#404040" stroke-width="0.7"/>
<text x="1938" y="261.3" font-size="17" fill="#222">8</text>
<rect x="1959.3" y="298.0" width="16" height="16" fill="#1f7000" stroke="#404040" stroke-width="0.7"/>
<text x="1938" y="315.5" font-size="17" fill="#222">10</text>
<rect x="1959.3" y="351.9" width="16" height="16" fill="#ffc800" stroke="#404040" stroke-width="0.7"/>
<text x="1938" y="369.4" font-size="17" fill="#222">12</text>
<rect x="1959.3" y="405.2" width="16" height="16" fill="#44ff00" stroke="#404040" stroke-width="0.7"/>
<text x="1938" y="422.7" font-size="17" fill="#222">14</text>
<text x="1743.6" y="999.7" font-size="17.5" fill="#3d4b4b" textLength="210" lengthAdjust="spacingAndGlyphs">Tam ekran için çift tıklayın.</text>
</g>
<rect x="34" y="1020" width="20" height="20" rx="3.5" fill="#005fb8"/>
<path d="M38.8 1030.9 L42.9 1034.3 L49.2 1027" stroke="#fff" stroke-width="1.2" fill="none"/>
<text x="58.2" y="1035.7" font-size="16.5" fill="#000" textLength="57.7" lengthAdjust="spacingAndGlyphs" >Kolonlar</text>
<rect x="212" y="1020" width="20" height="20" rx="3.5" fill="#005fb8"/>
<path d="M216.8 1030.9 L220.9 1034.3 L227.2 1027" stroke="#fff" stroke-width="1.2" fill="none"/>
<text x="236.2" y="1035.7" font-size="16.5" fill="#000" textLength="47.3" lengthAdjust="spacingAndGlyphs" >Kirişler</text>
<rect x="389" y="1020" width="20" height="20" rx="3.5" fill="#005fb8"/>
<path d="M393.8 1030.9 L397.9 1034.3 L404.2 1027" stroke="#fff" stroke-width="1.2" fill="none"/>
<text x="413" y="1035.7" font-size="16.5" fill="#000" textLength="57.3" lengthAdjust="spacingAndGlyphs" >Perdeler</text>
<rect x="626" y="1020" width="20" height="20" rx="3.5" fill="#005fb8"/>
<path d="M630.8 1030.9 L634.9 1034.3 L641.2 1027" stroke="#fff" stroke-width="1.2" fill="none"/>
<text x="650" y="1035.7" font-size="16.5" fill="#000" textLength="118.5" lengthAdjust="spacingAndGlyphs" >Boyuna donatılar</text>
<rect x="887" y="1020" width="20" height="20" rx="3.5" fill="#005fb8"/>
<path d="M891.8 1030.9 L895.9 1034.3 L902.2 1027" stroke="#fff" stroke-width="1.2" fill="none"/>
<text x="911" y="1035.7" font-size="16.5" fill="#000" textLength="107" lengthAdjust="spacingAndGlyphs" >Enine Donatılar</text>
<rect x="1157" y="1020" width="20" height="20" rx="3.5" fill="#005fb8"/>
<path d="M1161.8 1030.9 L1165.9 1034.3 L1172.2 1027" stroke="#fff" stroke-width="1.2" fill="none"/>
<text x="1181.4" y="1035.7" font-size="16.5" fill="#000" textLength="107.1" lengthAdjust="spacingAndGlyphs" >Çapa göre renk</text>
<rect x="489.5" y="1073.5" width="310" height="30" rx="4" fill="#fdfdfd" stroke="#d4d4d4" stroke-width="1"/>
<text x="564.8" y="1094.5" font-size="16.5" fill="#000" textLength="158.8" lengthAdjust="spacingAndGlyphs" >Donatı Hesap Makinesi</text>
<rect x="840.5" y="1078.5" width="19" height="19" rx="3.5" fill="#fdfdfd" stroke="#5e5e5e" stroke-width="1"/>
<text x="864" y="1093.6" font-size="16.5" fill="#000" textLength="209" lengthAdjust="spacingAndGlyphs" >Sadece Güçlendirme Perdeleri</text>
<rect x="1166.5" y="1078.5" width="19" height="19" rx="3.5" fill="#fdfdfd" stroke="#5e5e5e" stroke-width="1"/>
<text x="1190" y="1093.6" font-size="16.5" fill="#000" textLength="77.3" lengthAdjust="spacingAndGlyphs" >Tüm Katlar</text>
<rect x="1284.5" y="1073.5" width="74" height="30" rx="4" fill="#fdfdfd" stroke="#d4d4d4" stroke-width="1"/>
<text x="1309" y="1094.5" font-size="16.5" fill="#000" textLength="23.6" lengthAdjust="spacingAndGlyphs" >Seç</text>
<rect x="1370.5" y="1073.5" width="74" height="30" rx="4" fill="#fdfdfd" stroke="#d4d4d4" stroke-width="1"/>
<text x="1396.2" y="1094.5" font-size="16.5" fill="#000" textLength="22.0" lengthAdjust="spacingAndGlyphs" >&lt;&lt;</text>
<rect x="1456.5" y="1073.5" width="74" height="30" rx="4" fill="#fdfdfd" stroke="#d4d4d4" stroke-width="1"/>
<text x="1481.9" y="1094.5" font-size="16.5" fill="#000" textLength="22.1" lengthAdjust="spacingAndGlyphs" >&gt;&gt;</text>
<rect x="1543.5" y="1073.5" width="82" height="30" rx="4" fill="#fdfdfd" stroke="#d4d4d4" stroke-width="1"/>
<text x="1567" y="1094.5" font-size="16.5" fill="#000" textLength="35.2" lengthAdjust="spacingAndGlyphs" >Filtre</text>
<rect x="1642.5" y="1073.5" width="110" height="30" rx="4" fill="#fdfdfd" stroke="#d4d4d4" stroke-width="1"/>
<text x="1659.3" y="1094.5" font-size="16.5" fill="#000" textLength="75.5" lengthAdjust="spacingAndGlyphs" >Betonarme</text>
<rect x="1769.5" y="1073.5" width="110" height="30" rx="4" fill="#fdfdfd" stroke="#0067c0" stroke-width="1.6"/>
<text x="1797.4" y="1094.5" font-size="16.5" fill="#000" textLength="52.8" lengthAdjust="spacingAndGlyphs" >Tamam</text>
<rect x="1891.5" y="1073.5" width="110" height="30" rx="4" fill="#fdfdfd" stroke="#d4d4d4" stroke-width="1"/>
<text x="1930.3" y="1094.5" font-size="16.5" fill="#000" textLength="30.7" lengthAdjust="spacingAndGlyphs" >İptal</text>
</svg></body></html>
